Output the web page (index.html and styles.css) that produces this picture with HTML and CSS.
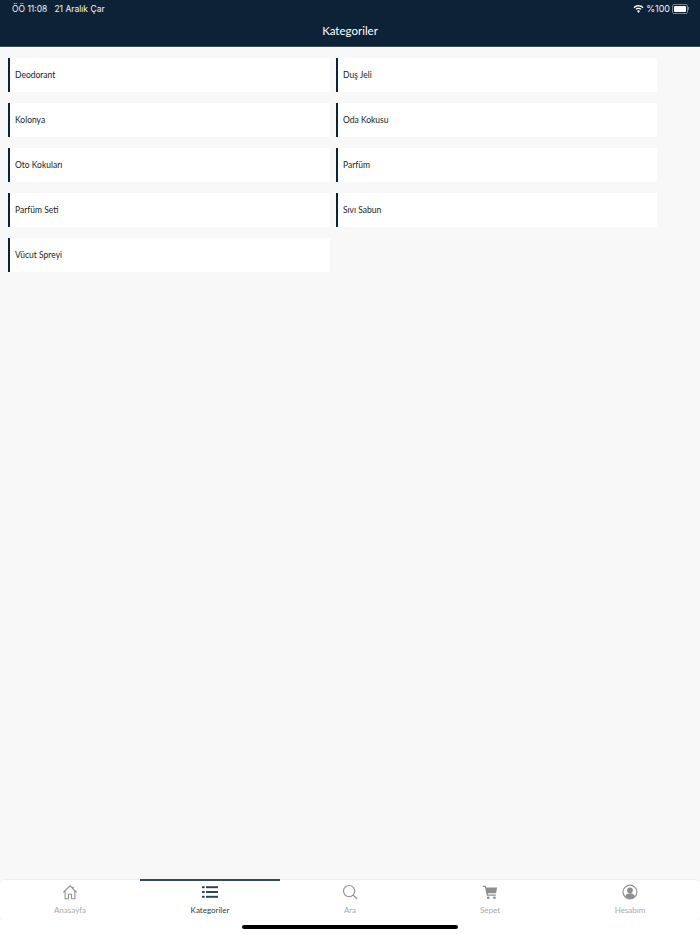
FILE: index.html
```html
<!DOCTYPE html>
<html>
<head>
    <title>Kategoriler</title>
    <link rel="stylesheet" href="styles.css">
</head>
<body>
    <div class="app">
        <div class="header">
            <div class="status-bar">
                <div class="status-left">
                    <span>ÖÖ 11:08</span>
                    <span>21 Aralık Çar</span>
                </div>
                <div class="status-right">
                    <svg class="wifi" viewBox="0 0 16 12" width="11" height="8">
                        <path fill="#fff" d="M8 2.2c2.4 0 4.5.9 6.1 2.5l1.3-1.4C13.500 1.300 10.900 0 8 0S2.500 1.300.6 3.300l1.300 1.400C3.500 3.100 5.600 2.200 8 2.200zM8 6c1.300 0 2.400.5 3.300 1.300l1.300-1.400C11.400 4.700 9.800 4 8 4s-3.400.7-4.600 1.900l1.300 1.400C5.600 6.500 6.700 6 8 6zM8 8c-.9 0-1.700.4-2.200.9L8 12l2.200-3.100C9.700 8.400 8.900 8 8 8z"/>
                    </svg>
                    <span>%100</span>
                    <div class="battery"><div class="battery-fill"></div></div>
                    <div class="battery-tip"></div>
                </div>
            </div>
            <div class="title">Kategoriler</div>
        </div>

        <div class="content">
            <div class="category-list">
                <div class="category">Deodorant</div>
                <div class="category">Duş Jeli</div>
                <div class="category">Kolonya</div>
                <div class="category">Oda Kokusu</div>
                <div class="category">Oto Kokuları</div>
                <div class="category">Parfüm</div>
                <div class="category">Parfüm Seti</div>
                <div class="category">Sıvı Sabun</div>
                <div class="category">Vücut Spreyi</div>
            </div>
        </div>

        <div class="tabbar">
            <div class="tab">
                <svg viewBox="0 0 18 18" width="16" height="16" fill="none" stroke="#8e8e8e" stroke-width="1.200">
                    <path d="M1.500 9.500 9 2l7.500 7.500M3.500 8v8.500h3.700v-5h3.600v5h3.700V8M12.500 3v2.500"/>
                </svg>
                <span>Anasayfa</span>
            </div>
            <div class="tab active">
                <svg viewBox="0 0 18 18" width="16" height="16" fill="#2c4255">
                    <rect x="0" y="2.500" width="3" height="2.200"/>
                    <rect x="4.500" y="2.500" width="13.500" height="2.200"/>
                    <rect x="0" y="7.900" width="3" height="2.200"/>
                    <rect x="4.500" y="7.900" width="13.500" height="2.200"/>
                    <rect x="0" y="13.300" width="3" height="2.200"/>
                    <rect x="4.500" y="13.300" width="13.500" height="2.200"/>
                </svg>
                <span>Kategoriler</span>
            </div>
            <div class="tab">
                <svg viewBox="0 0 18 18" width="16" height="16" fill="none" stroke="#8e8e8e" stroke-width="1.300">
                    <circle cx="8" cy="8" r="6.300"/>
                    <path d="m12.600 12.600 4 4" stroke-linecap="round"/>
                </svg>
                <span>Ara</span>
            </div>
            <div class="tab">
                <svg viewBox="0 0 18 18" width="16" height="16" fill="#8e8e8e">
                    <path d="M1 2h3.200l.5 1.800H17l-1.200 6.700H6.500l.3 1.400h8.700v1.400H5.500L3.200 3.400H1z"/>
                    <circle cx="7" cy="15.500" r="1.500"/>
                    <circle cx="14" cy="15.500" r="1.500"/>
                </svg>
                <span>Sepet</span>
            </div>
            <div class="tab">
                <svg viewBox="0 0 18 18" width="16" height="16">
                    <circle cx="9" cy="9" r="7.800" fill="none" stroke="#8e8e8e" stroke-width="1.300"/>
                    <circle cx="9" cy="7" r="3.200" fill="#8e8e8e"/>
                    <path fill="#8e8e8e" d="M3.500 14c.8-2.500 2.800-3.500 5.500-3.500s4.700 1 5.500 3.500C13 15.600 11.200 16.400 9 16.400S5 15.600 3.500 14z"/>
                </svg>
                <span>Hesabım</span>
            </div>
        </div>
        <div class="home-area">
            <div class="home-indicator"></div>
        </div>
    </div>
</body>
</html>
```

FILE: styles.css
```css
html, body {
    margin: 0;
    padding: 0;
}
body {
    font-family: Lato, "Noto Sans", sans-serif;
    background-color: #f8f8f8;
}
.app {
    width: 700px;
    height: 934px;
    display: flex;
    flex-direction: column;
    overflow: hidden;
}
.header {
    height: 46px;
    flex-shrink: 0;
    background-color: #0c2337;
    border-bottom: 1px solid #3d5060;
    color: #fff;
}
.status-bar {
    height: 17px;
    padding: 0 11px 0 12px;
    display: flex;
    justify-content: space-between;
    align-items: center;
    font-family: Inter, sans-serif;
    font-size: 8.500px;
    color: #f4f4f4;
}
.status-left {
    display: flex;
    gap: 7px;
}
.status-right {
    display: flex;
    align-items: center;
    gap: 3px;
    font-size: 9px;
}
.wifi {
    margin-right: -1px;
}
.battery {
    width: 12px;
    height: 6px;
    padding: 1px;
    margin-left: -1px;
    border: 1px solid #77828c;
    border-radius: 2px;
}
.battery-fill {
    height: 100%;
    background-color: #fff;
    border-radius: 1px;
}
.battery-tip {
    width: 1px;
    height: 3px;
    margin-left: -3px;
    background-color: #77828c;
}
.title {
    text-align: center;
    font-size: 11.500px;
    line-height: 14px;
    margin-top: 7px;
}
.content {
    flex: 1;
    padding: 11px 0 0 8px;
}
.category-list {
    width: 650px;
    display: grid;
    grid-template-columns: 322px 321px;
    column-gap: 6px;
    row-gap: 11px;
}
.category {
    height: 34px;
    line-height: 35px;
    padding-left: 5px;
    background-color: #fff;
    border-left: 2px solid #0c2337;
    font-size: 8.500px;
    color: #222;
}
.tabbar {
    height: 40px;
    flex-shrink: 0;
    display: grid;
    grid-template-columns: repeat(5, 1fr);
    background-color: #fff;
    border-top: 1px solid #eeeeee;
    border-radius: 5px;
}
.tab {
    display: flex;
    flex-direction: column;
    align-items: center;
    padding-top: 4px;
    font-size: 8px;
    color: #aaaaaa;
}
.tab svg {
    margin-bottom: 5px;
}
.tab.active {
    color: #2c4255;
    box-shadow: 0 -1px 0 #33485a, inset 0 1px 0 #33485a;
}
.home-area {
    height: 14px;
    flex-shrink: 0;
    background-color: #fff;
    display: flex;
    justify-content: center;
    padding-top: 5px;
    box-sizing: border-box;
}
.home-indicator {
    width: 216px;
    height: 4px;
    background-color: #000;
    border-radius: 2px;
}
```
